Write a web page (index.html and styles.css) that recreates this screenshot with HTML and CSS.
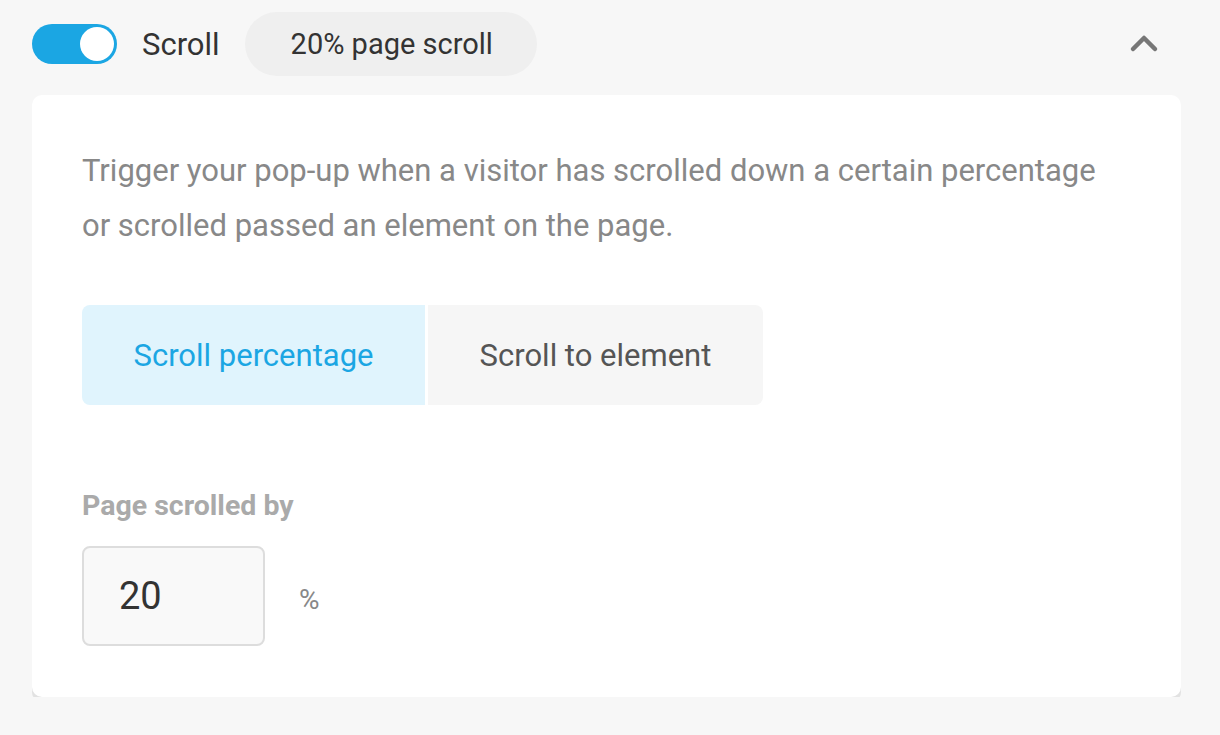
FILE: index.html
```html
<!DOCTYPE html>
<html>
<head>
<meta charset="utf-8">
<link rel="stylesheet" href="styles.css">
</head>
<body>
<div class="panel">
  <div class="header">
    <div class="toggle"><span class="knob"></span></div>
    <span class="title">Scroll</span>
    <span class="pill">20% page scroll</span>
    <svg class="chevron" width="30" height="20" viewBox="0 0 30 20">
      <path d="M4 15 L15 4 L26 15" fill="none" stroke="#777" stroke-width="4.5" stroke-linecap="round" stroke-linejoin="round"/>
    </svg>
  </div>
  <div class="card">
    <p class="desc">Trigger your pop-up when a visitor has scrolled down a certain percentage or scrolled passed an element on the page.</p>
    <div class="tabs">
      <div class="tab active">Scroll percentage</div>
      <div class="tab">Scroll to element</div>
    </div>
    <div class="label">Page scrolled by</div>
    <div class="field">
      <div class="input">20</div>
      <span class="unit">%</span>
    </div>
  </div>
</div>
</body>
</html>
```
FILE: styles.css
```css
html, body {
  margin: 0;
  padding: 0;
  background: #f7f7f7;
  font-family: Roboto, "Noto Sans", sans-serif;
}
.panel {
  padding: 12px 39px 0 32px;
}
.header {
  display: flex;
  align-items: center;
  height: 64px;
}
.toggle {
  width: 85px;
  height: 40px;
  border-radius: 20px;
  background: #1ba6e3;
  box-sizing: border-box;
  padding: 3px;
  display: flex;
  justify-content: flex-end;
}
.knob {
  width: 34px;
  height: 34px;
  border-radius: 50%;
  background: #fff;
}
.title {
  margin-left: 25px;
  font-size: 31px;
  color: #333;
}
.pill {
  margin-left: 25px;
  height: 64px;
  padding: 0 44px 0 46px;
  border-radius: 32px;
  background: #efefef;
  display: flex;
  align-items: center;
  font-size: 29px;
  color: #333;
}
.chevron {
  margin-left: auto;
  margin-right: 22px;
}
.card {
  margin-top: 19px;
  background: #fff;
  border-radius: 10px;
  box-shadow: 0 5px 0 #e2e2e2;
  padding: 48px 50px 50px 50px;
  height: 602px;
  box-sizing: border-box;
}
.desc {
  margin: 0;
  font-size: 31px;
  line-height: 55px;
  color: #888;
  max-width: 1040px;
}
.tabs {
  margin-top: 52px;
  display: flex;
  gap: 3px;
}
.tab {
  height: 100px;
  display: flex;
  align-items: center;
  justify-content: center;
  font-size: 31px;
  background: #f6f6f6;
  color: #555;
  width: 335px;
  border-radius: 0 8px 8px 0;
}
.tab.active {
  width: 343px;
  background: #e0f4fd;
  color: #1ba6e3;
  border-radius: 8px 0 0 8px;
}
.label {
  margin-top: 84px;
  font-size: 28.5px;
  font-weight: 700;
  color: #aaa;
}
.field {
  margin-top: 24px;
  display: flex;
  align-items: center;
}
.input {
  width: 183px;
  height: 100px;
  box-sizing: border-box;
  border: 2px solid #ddd;
  border-radius: 8px;
  background: #f9f9f9;
  display: flex;
  align-items: center;
  padding-left: 35px;
  font-size: 38px;
  color: #333;
}
.unit {
  margin-left: 34px;
  font-size: 28px;
  color: #888;
  padding-top: 6px;
}
```
